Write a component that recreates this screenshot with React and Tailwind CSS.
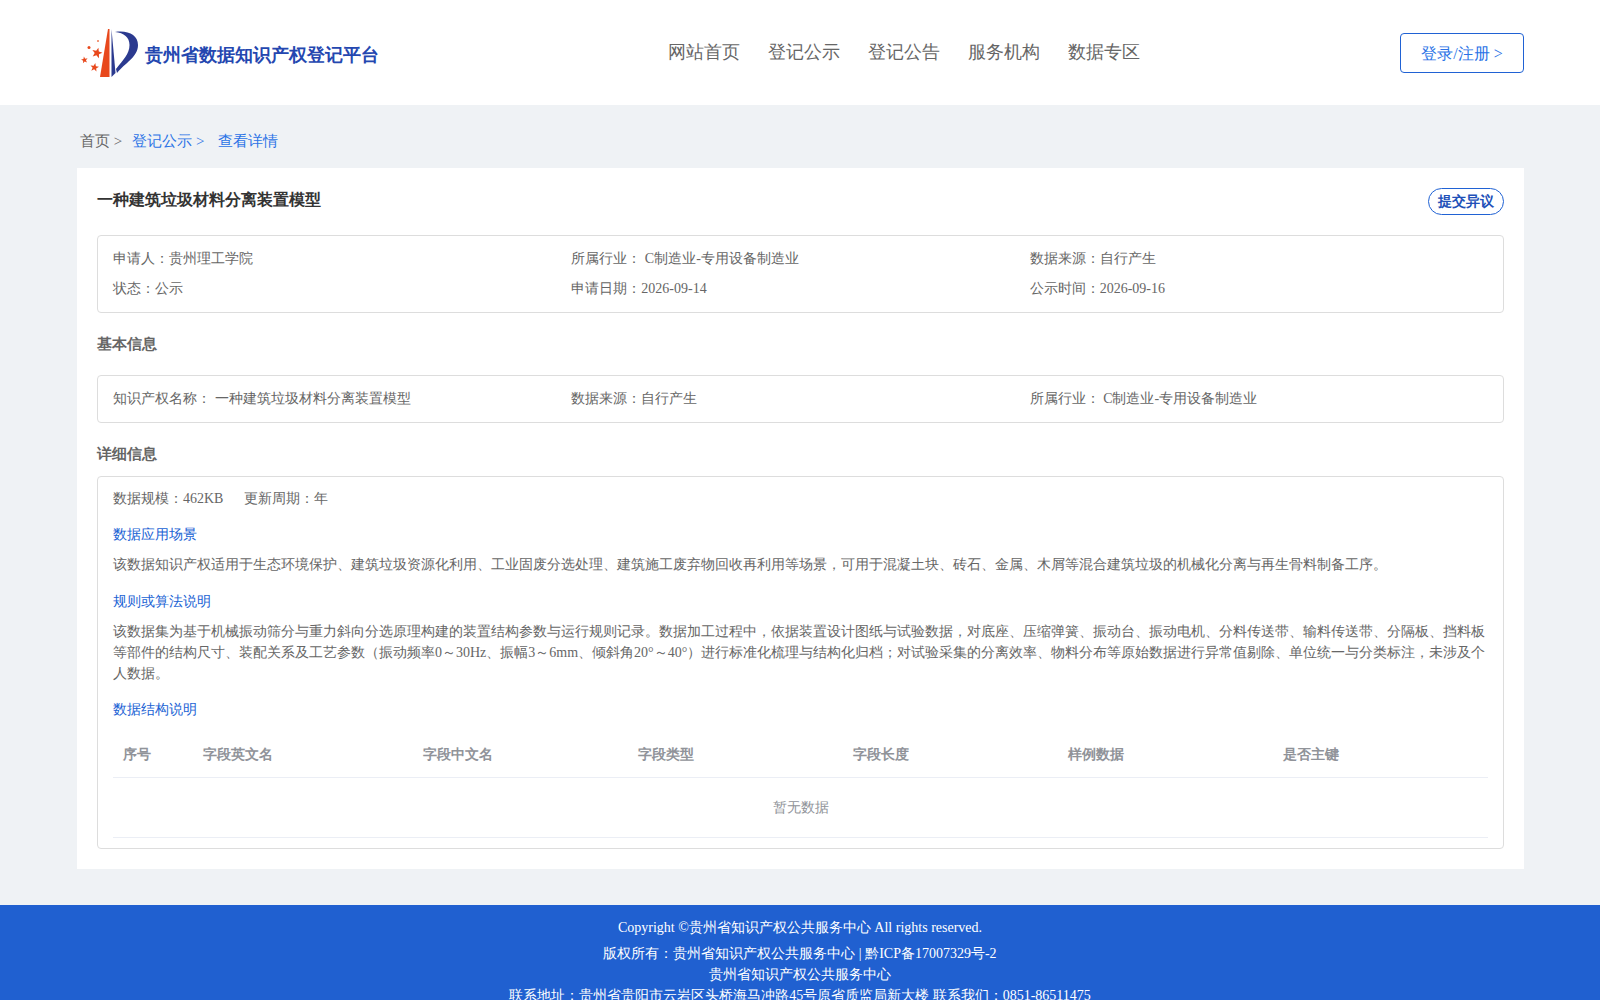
function Star({ cx, cy, r, fill = "#e8481c", rot = 0 }) {
  const pts = [];
  for (let i = 0; i < 10; i++) {
    const rad = i % 2 === 0 ? r : r * 0.42;
    const a = ((-90 + rot + i * 36) * Math.PI) / 180;
    pts.push(`${(cx + rad * Math.cos(a)).toFixed(2)},${(cy + rad * Math.sin(a)).toFixed(2)}`);
  }
  return <polygon points={pts.join(" ")} fill={fill} />;
}

function Logo() {
  return (
    <svg width="70" height="62" viewBox="0 0 70 62" className="shrink-0">
      <path d="M33 7 L25 55 L34.500 55 L34.500 7 Z" fill="#e8481c" />
      <path d="M36.500 7 L36.500 55 L40.500 51 Z" fill="#2b3a8f" />
      <path d="M40 10 C53 8 63 13 63 23 C63 35 50 41 42 51 L41 47 C48 38 54.500 32 54.500 23 C54.500 15 49 11 40 10 Z" fill="#2b3a8f" />
      <Star cx={22} cy={31} r={5.5} rot={15} />
      <Star cx={9.500} cy={38} r={3.500} rot={-10} />
      <Star cx={19.500} cy={45.500} r={4.500} rot={10} />
      <circle cx="14" cy="25.500" r="1.500" fill="#e8481c" />
      <circle cx="23" cy="19" r="1" fill="#ee7a55" />
    </svg>
  );
}

function Row({ items }) {
  return (
    <div className="grid grid-cols-3 text-sm leading-[30px] text-[#666]">
      {items.map((t, i) => <div key={i}>{t}</div>)}
    </div>
  );
}

export default function App() {
  return (
    <div className="h-[1000px] overflow-hidden bg-[#eff2f5] [font-family:'Liberation_Serif',serif] text-[#666]">
      <header className="flex h-[105px] items-start bg-white pl-[75px] pr-[76px]">
        <div className="flex w-[505px] items-center pt-[22px]">
          <Logo />
          <span className="mt-[4px] text-lg font-bold text-[#2447b0]">贵州省数据知识产权登记平台</span>
        </div>
        <nav className="ml-[88px] flex gap-7 pt-[38px] text-lg leading-[28px] text-[#666]">
          <a>网站首页</a><a>登记公示</a><a>登记公告</a><a>服务机构</a><a>数据专区</a>
        </nav>
        <div className="ml-auto pt-[33px]">
          <button className="h-10 w-[124px] rounded border border-[#2062d4] pt-[2px] text-base text-[#2b73e6]">登录/注册 &gt;</button>
        </div>
      </header>

      <div className="flex h-[63px] items-center pl-[80px] pt-[10px] text-[15px]">
        <span>首页 &gt;</span>
        <span className="ml-[10px] text-[#2b73e6]">登记公示 &gt;</span>
        <span className="ml-[14px] text-[#2b73e6]">查看详情</span>
      </div>

      <main className="ml-[77px] mr-[76px] bg-white p-5">
        <div className="flex items-start justify-between">
          <h1 className="text-base font-bold leading-[24px] text-[#333]">一种建筑垃圾材料分离装置模型</h1>
          <span className="flex h-[27px] w-[76px] items-center justify-center rounded-[14px] border border-[#2062d4] text-sm font-bold text-[#2150b8]">提交异议</span>
        </div>

        <section className="mt-5 rounded border border-[#ddd] px-[15px] py-[8px]">
          <Row items={["申请人：贵州理工学院", "所属行业： C制造业-专用设备制造业", "数据来源：自行产生"]} />
          <Row items={["状态：公示", "申请日期：2026-09-14", "公示时间：2026-09-16"]} />
        </section>

        <h2 className="mt-[20px] text-[15px] font-bold leading-[22px] text-[#666]">基本信息</h2>

        <section className="mt-[20px] rounded border border-[#ddd] px-[15px] py-[8px]">
          <Row items={["知识产权名称： 一种建筑垃圾材料分离装置模型", "数据来源：自行产生", "所属行业： C制造业-专用设备制造业"]} />
        </section>

        <h2 className="mt-[20px] text-[15px] font-bold leading-[22px] text-[#666]">详细信息</h2>

        <section className="mt-[11px] rounded border border-[#ddd] px-[15px] pb-[10px] pt-[7px] text-sm text-[#666]">
          <div className="flex gap-[21px] leading-[30px]"><span>数据规模：462KB</span><span>更新周期：年</span></div>
          <h3 className="mt-[6px] leading-[30px] text-[#2062d4]">数据应用场景</h3>
          <p className="mt-[3px] leading-[24px]">该数据知识产权适用于生态环境保护、建筑垃圾资源化利用、工业固废分选处理、建筑施工废弃物回收再利用等场景，可用于混凝土块、砖石、金属、木屑等混合建筑垃圾的机械化分离与再生骨料制备工序。</p>
          <h3 className="mt-[10px] leading-[30px] text-[#2062d4]">规则或算法说明</h3>
          <p className="mt-[4px] leading-[21px]">该数据集为基于机械振动筛分与重力斜向分选原理构建的装置结构参数与运行规则记录。数据加工过程中，依据装置设计图纸与试验数据，对底座、压缩弹簧、振动台、振动电机、分料传送带、输料传送带、分隔板、挡料板等部件的结构尺寸、装配关系及工艺参数（振动频率0～30Hz、振幅3～6mm、倾斜角20°～40°）进行标准化梳理与结构化归档；对试验采集的分离效率、物料分布等原始数据进行异常值剔除、单位统一与分类标注，未涉及个人数据。</p>
          <h3 className="mt-[11px] leading-[30px] text-[#2062d4]">数据结构说明</h3>
          <div className="mt-[7px] flex h-[46px] items-center border-b border-[#ebeef5] font-bold text-[#909399]">
            <div className="w-[80px] pl-[10px]">序号</div>
            <div className="w-[220px] pl-[10px]">字段英文名</div>
            <div className="w-[215px] pl-[10px]">字段中文名</div>
            <div className="w-[215px] pl-[10px]">字段类型</div>
            <div className="w-[215px] pl-[10px]">字段长度</div>
            <div className="w-[215px] pl-[10px]">样例数据</div>
            <div className="pl-[10px]">是否主键</div>
          </div>
          <div className="flex h-[60px] items-center justify-center border-b border-[#ebeef5] text-[#909399]">暂无数据</div>
        </section>
      </main>

      <footer className="mt-[36px] bg-[#2060d0] pb-[10px] pt-[12px] text-center text-sm text-white">
        <p className="leading-[22px]">Copyright ©贵州省知识产权公共服务中心 All rights reserved.</p>
        <p className="mt-[4px] leading-[21px]">版权所有：贵州省知识产权公共服务中心 | 黔ICP备17007329号-2</p>
        <p className="leading-[21px]">贵州省知识产权公共服务中心</p>
        <p className="leading-[21px]">联系地址：贵州省贵阳市云岩区头桥海马冲路45号原省质监局新大楼 联系我们：0851-86511475</p>
      </footer>
    </div>
  );
}
